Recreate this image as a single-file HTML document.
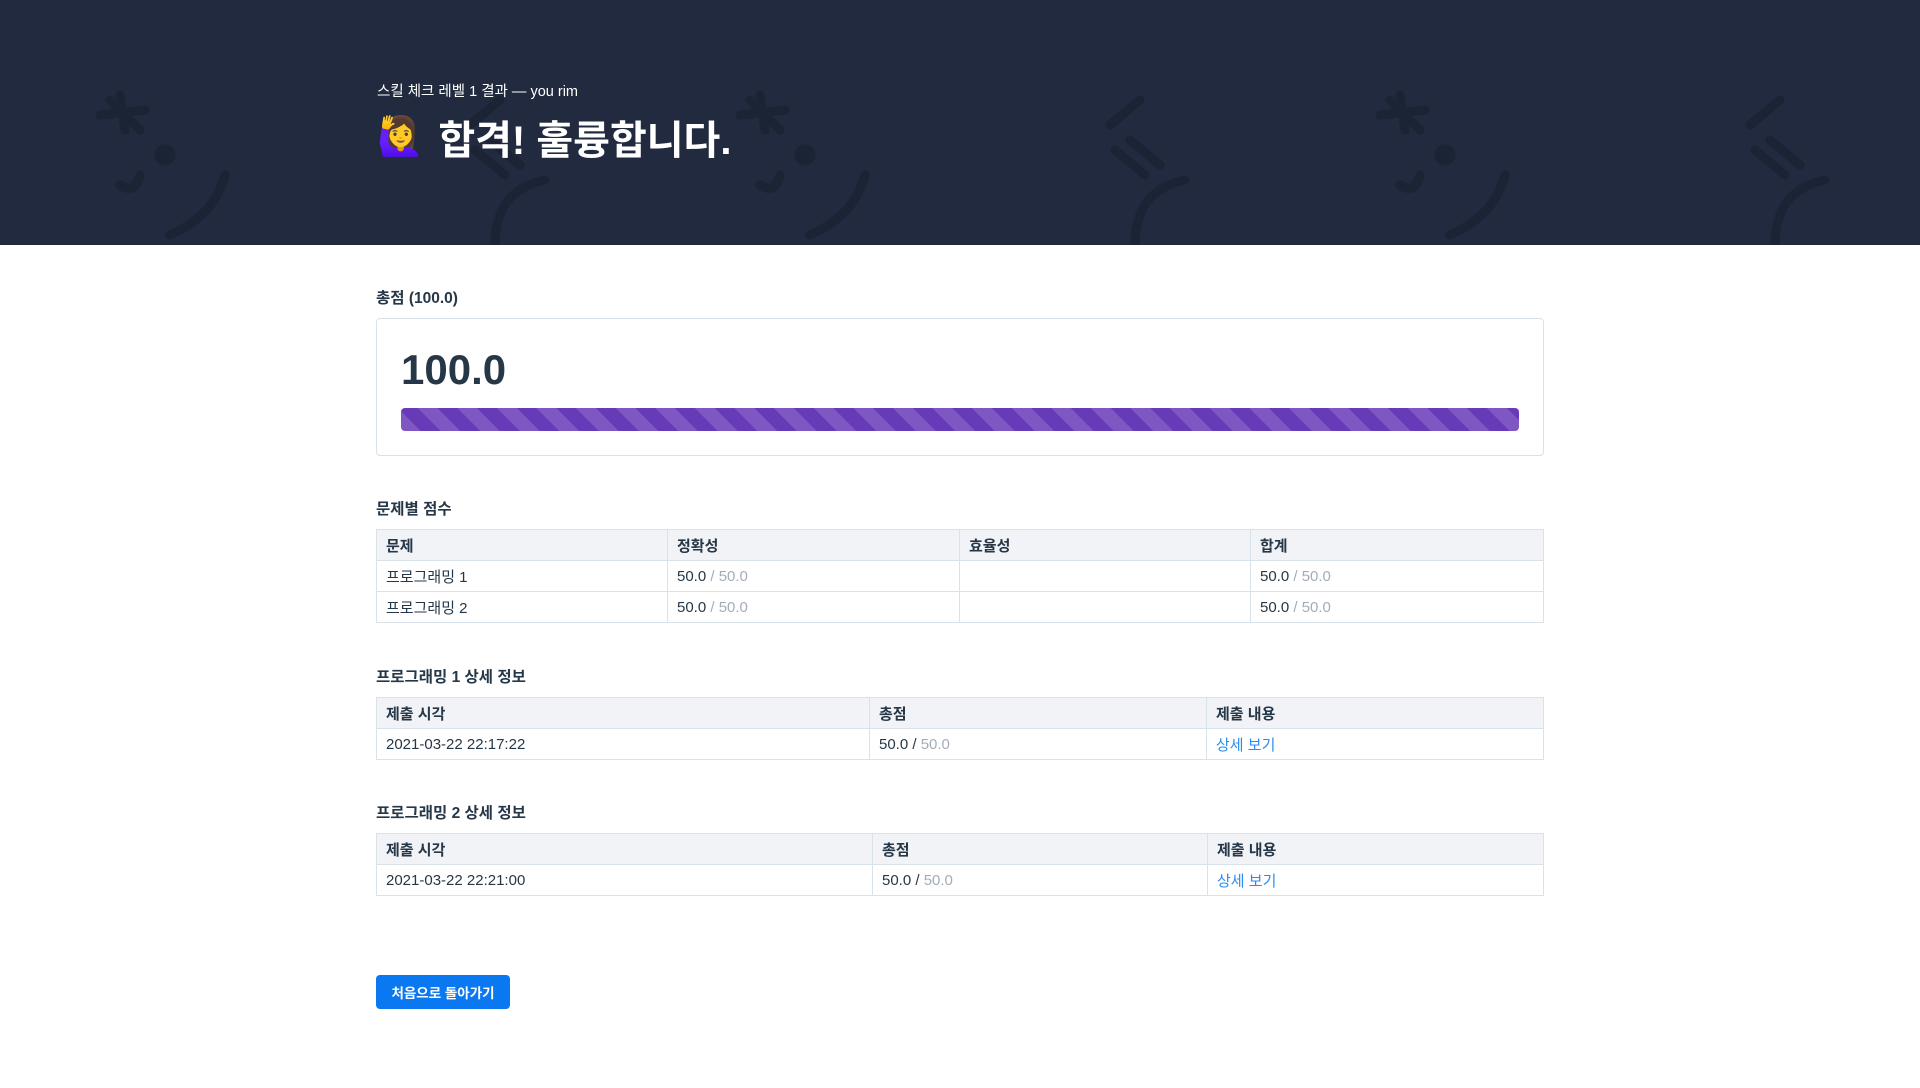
<!DOCTYPE html>
<html><head><meta charset="utf-8"><style>
*{box-sizing:border-box;margin:0;padding:0}
body{width:1920px;height:1088px;background:#fff;font-family:"Liberation Sans","Noto Sans CJK KR",sans-serif;color:#263747;overflow:hidden}
.hdr{position:relative;height:245px;background:#212a3e;overflow:hidden}
.hdr svg{position:absolute;left:0;top:0}
.sub{position:absolute;left:377px;top:80px;color:#fff;font-size:14.5px}
.ttl{position:absolute;left:377px;top:108px;color:#fff;font-size:40px;font-weight:bold;display:flex;align-items:center}
.ttl .e{font-size:38px;margin-right:14px}
h3{font-size:15.5px;font-weight:bold;color:#263747;position:absolute;left:376px}
.card{position:absolute;left:376px;top:318px;width:1168px;height:138px;border:1px solid #d7e2eb;border-radius:4px}
.big{position:absolute;left:24px;top:27px;font-size:42px;font-weight:bold;color:#263747}
.bar{position:absolute;left:24px;top:89px;width:1118px;height:23px;border-radius:4px;background:repeating-linear-gradient(45deg,#7e57c2 0 14px,#673ab7 14px 28px)}
table{position:absolute;left:376px;width:1168px;border-collapse:collapse;font-size:15px}
td,th{border:1px solid #d7e2eb;height:31px;padding:0 9px;text-align:left;vertical-align:middle}
th{background:#f2f3f7;font-weight:bold;color:#263747}
td{color:#263747}
.g{color:#a3adb9}
a{color:#2a8cf0;text-decoration:none}
.btn{position:absolute;left:376px;top:975px;width:134px;height:34px;background:#0a78f0;border-radius:4px;color:#fff;font-size:13.5px;font-weight:bold;display:flex;align-items:center;justify-content:center}
</style></head><body>
<div class="hdr">
<svg width="1920" height="245" fill="none" stroke="#1b2335" stroke-width="9" stroke-linecap="round">
<g><path d="M120 95 L125 130 M100 115 L145 110 M110 100 L140 130"/><circle cx="165" cy="155" r="6" fill="#1b2335"/><path d="M140 175 q-5 20 -20 10"/><path d="M225 175 q-10 40 -55 60"/></g>
<g transform="translate(640,0)"><path d="M120 95 L125 130 M100 115 L145 110 M110 100 L140 130"/><circle cx="165" cy="155" r="6" fill="#1b2335"/><path d="M140 175 q-5 20 -20 10"/><path d="M225 175 q-10 40 -55 60"/></g>
<g transform="translate(1280,0)"><path d="M120 95 L125 130 M100 115 L145 110 M110 100 L140 130"/><circle cx="165" cy="155" r="6" fill="#1b2335"/><path d="M140 175 q-5 20 -20 10"/><path d="M225 175 q-10 40 -55 60"/></g>
<g><path d="M500 100 L470 125 M475 150 L505 175 M490 140 L520 165 M545 180 q-50 10 -50 65"/></g>
<g transform="translate(640,0)"><path d="M500 100 L470 125 M475 150 L505 175 M490 140 L520 165 M545 180 q-50 10 -50 65"/></g>
<g transform="translate(1280,0)"><path d="M500 100 L470 125 M475 150 L505 175 M490 140 L520 165 M545 180 q-50 10 -50 65"/></g>
</svg>
<div class="sub">스킬 체크 레벨 1 결과 — you rim</div>
<div class="ttl"><span class="e">🙋‍♀️</span>합격! 훌륭합니다.</div>
</div>
<h3 style="top:286px">총점 (100.0)</h3>
<div class="card"><div class="big">100.0</div><div class="bar"></div></div>
<h3 style="top:497px">문제별 점수</h3>
<table style="top:529px">
<tr><th style="width:291px">문제</th><th style="width:292px">정확성</th><th style="width:291px">효율성</th><th>합계</th></tr>
<tr><td>프로그래밍 1</td><td>50.0 <span class="g">/ 50.0</span></td><td></td><td>50.0 <span class="g">/ 50.0</span></td></tr>
<tr><td>프로그래밍 2</td><td>50.0 <span class="g">/ 50.0</span></td><td></td><td>50.0 <span class="g">/ 50.0</span></td></tr>
</table>
<h3 style="top:665px">프로그래밍 1 상세 정보</h3>
<table style="top:697px">
<tr><th style="width:493px">제출 시각</th><th style="width:337px">총점</th><th>제출 내용</th></tr>
<tr><td>2021-03-22 22:17:22</td><td>50.0 / <span class="g">50.0</span></td><td><a>상세 보기</a></td></tr>
</table>
<h3 style="top:801px">프로그래밍 2 상세 정보</h3>
<table style="top:833px">
<tr><th style="width:496px">제출 시각</th><th style="width:335px">총점</th><th>제출 내용</th></tr>
<tr><td>2021-03-22 22:21:00</td><td>50.0 / <span class="g">50.0</span></td><td><a>상세 보기</a></td></tr>
</table>
<div class="btn">처음으로 돌아가기</div>
</body></html>
